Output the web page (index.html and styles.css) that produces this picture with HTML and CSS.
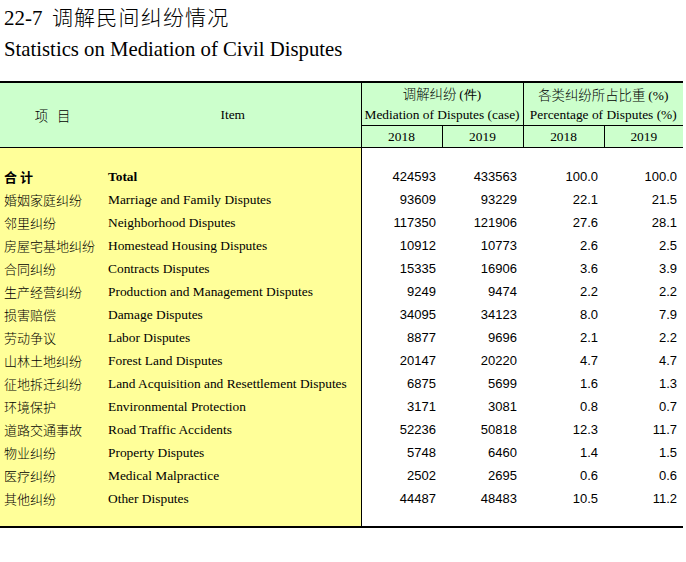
FILE: index.html
```html
<!DOCTYPE html>
<html lang="zh">
<head>
<meta charset="utf-8">
<link rel="stylesheet" href="styles.css">
</head>
<body>
<div class="titles">
  <div class="title-cn"><span class="num">22-7</span>&nbsp; <span class="cn-txt">调解民间纠纷情况</span></div>
  <div class="title-en">Statistics on Mediation of Civil Disputes</div>
</div>
<table class="stats">
  <colgroup>
    <col class="c-cn"><col class="c-en"><col class="c-n"><col class="c-n"><col class="c-n"><col class="c-n4">
  </colgroup>
  <thead>
    <tr class="h1">
      <th rowspan="3" class="h-cn">项&nbsp;&nbsp;&nbsp;目</th>
      <th rowspan="3" class="h-en vline">Item</th>
      <th colspan="2" class="vline cn-head">调解纠纷 <span class="ser">(件)</span></th>
      <th colspan="2" class="cn-head">各类纠纷所占比重 <span class="ser">(%)</span></th>
    </tr>
    <tr class="h2">
      <th colspan="2" class="vline">Mediation of Disputes (case)</th>
      <th colspan="2">Percentage of Disputes (%)</th>
    </tr>
    <tr class="h3">
      <th class="vline">2018</th><th class="vline">2019</th><th class="vline">2018</th><th>2019</th>
    </tr>
  </thead>
  <tbody>
    <tr class="gap top"><td></td><td class="vline"></td><td colspan="4"></td></tr>
    <tr class="total"><td class="cn">合&nbsp;计</td><td class="en vline">Total</td><td>424593</td><td>433563</td><td>100.0</td><td>100.0</td></tr>
    <tr><td class="cn">婚姻家庭纠纷</td><td class="en vline">Marriage and Family Disputes</td><td>93609</td><td>93229</td><td>22.1</td><td>21.5</td></tr>
    <tr><td class="cn">邻里纠纷</td><td class="en vline">Neighborhood Disputes</td><td>117350</td><td>121906</td><td>27.6</td><td>28.1</td></tr>
    <tr><td class="cn">房屋宅基地纠纷</td><td class="en vline">Homestead Housing Disputes</td><td>10912</td><td>10773</td><td>2.6</td><td>2.5</td></tr>
    <tr><td class="cn">合同纠纷</td><td class="en vline">Contracts Disputes</td><td>15335</td><td>16906</td><td>3.6</td><td>3.9</td></tr>
    <tr><td class="cn">生产经营纠纷</td><td class="en vline">Production and Management Disputes</td><td>9249</td><td>9474</td><td>2.2</td><td>2.2</td></tr>
    <tr><td class="cn">损害赔偿</td><td class="en vline">Damage Disputes</td><td>34095</td><td>34123</td><td>8.0</td><td>7.9</td></tr>
    <tr><td class="cn">劳动争议</td><td class="en vline">Labor Disputes</td><td>8877</td><td>9696</td><td>2.1</td><td>2.2</td></tr>
    <tr><td class="cn">山林土地纠纷</td><td class="en vline">Forest Land Disputes</td><td>20147</td><td>20220</td><td>4.7</td><td>4.7</td></tr>
    <tr><td class="cn">征地拆迁纠纷</td><td class="en vline">Land Acquisition and Resettlement Disputes</td><td>6875</td><td>5699</td><td>1.6</td><td>1.3</td></tr>
    <tr><td class="cn">环境保护</td><td class="en vline">Environmental Protection</td><td>3171</td><td>3081</td><td>0.8</td><td>0.7</td></tr>
    <tr><td class="cn">道路交通事故</td><td class="en vline">Road Traffic Accidents</td><td>52236</td><td>50818</td><td>12.3</td><td>11.7</td></tr>
    <tr><td class="cn">物业纠纷</td><td class="en vline">Property Disputes</td><td>5748</td><td>6460</td><td>1.4</td><td>1.5</td></tr>
    <tr><td class="cn">医疗纠纷</td><td class="en vline">Medical Malpractice</td><td>2502</td><td>2695</td><td>0.6</td><td>0.6</td></tr>
    <tr><td class="cn">其他纠纷</td><td class="en vline">Other Disputes</td><td>44487</td><td>48483</td><td>10.5</td><td>11.2</td></tr>
    <tr class="gap bottom"><td></td><td class="vline"></td><td colspan="4"></td></tr>
  </tbody>
</table>
</body>
</html>
```
FILE: styles.css
```css
html, body {
  margin: 0;
  padding: 0;
  background: #ffffff;
  color: #000000;
}
.titles {
  padding: 4px 0 0 4px;
  height: 77px;
  box-sizing: border-box;
}
.title-cn {
  font-family: "Noto Sans CJK SC", sans-serif;
  font-size: 21px;
  line-height: 24px;
  height: 32px;
  white-space: nowrap;
}
.title-cn .num {
  font-family: "Liberation Serif", serif;
  font-size: 21px;
}
.title-cn .cn-txt {
  letter-spacing: 1.2px;
  font-weight: 300;
}
.title-en {
  font-family: "Liberation Serif", serif;
  font-size: 20.75px;
  line-height: 26px;
}
.stats {
  border-collapse: collapse;
  width: 683px;
  table-layout: fixed;
  margin-top: 4px;
  border-top: 2px solid #000;
  border-bottom: 2px solid #000;
}
.c-cn { width: 105px; }
.c-en { width: 256px; }
.c-n { width: 81px; }
.c-n4 { width: 79px; }
.stats th {
  background: #ccffcc;
  font-weight: normal;
  font-family: "Liberation Serif", serif;
  font-size: 13.4px;
  padding: 0;
  text-align: center;
  white-space: nowrap;
}
.stats th.cn-head,
.stats .h-cn {
  font-family: "Noto Sans CJK SC", sans-serif;
  font-weight: 300;
}
.stats th .ser {
  font-family: "Liberation Serif", serif;
  font-weight: normal;
}
.h1 th { height: 21px; }
.h2 th { height: 21px; border-bottom: 1px solid #000; }
.h3 th { height: 21px; border-bottom: 1px solid #000; }
.h1 .h-cn, .h1 .h-en { border-bottom: 1px solid #000; }
.vline { border-right: 1px solid #000; }
.stats td {
  height: 23px;
  padding: 0 6px 0 0;
  font-family: "Liberation Sans", sans-serif;
  font-size: 13px;
  text-align: right;
  white-space: nowrap;
  background: #ffffff;
}
.stats td:first-child,
.stats td:nth-child(2) {
  background: #ffff99;
  text-align: left;
}
.stats td.cn {
  font-family: "Noto Sans CJK SC", sans-serif;
  font-weight: 300;
  padding-left: 4px;
}
.stats td.en {
  font-family: "Liberation Serif", serif;
  font-size: 13.4px;
  padding-left: 3px;
}
.stats tr.total td.cn,
.stats tr.total td.en {
  font-weight: bold;
}
.stats tr.gap.top td { height: 17px; }
.stats tr.gap.bottom td { height: 16px; }
```
